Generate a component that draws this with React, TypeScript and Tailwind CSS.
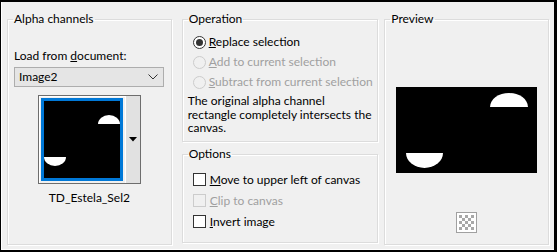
import React from "react";

const font = { fontFamily: 'Lato, "Segoe UI", sans-serif' };

function Radio({ checked, disabled, children }: { checked?: boolean; disabled?: boolean; children: React.ReactNode }) {
  return (
    <div className={`flex items-center h-[20px] whitespace-nowrap ${disabled ? "text-[#a0a0a0]" : "text-black"}`}>
      <span
        className={`w-[13px] h-[13px] shrink-0 rounded-full border flex items-center justify-center ${
          disabled ? "border-[#cccccc] bg-[#f0f0f0]" : "border-[#333333] bg-white"
        }`}
      >
        {checked && <span className="w-[7px] h-[7px] rounded-full bg-[#333333]" />}
      </span>
      <span className="ml-[3px]">{children}</span>
    </div>
  );
}

function Check({ disabled, children }: { disabled?: boolean; children: React.ReactNode }) {
  return (
    <div className={`flex items-center h-[21px] whitespace-nowrap ${disabled ? "text-[#a0a0a0]" : "text-black"}`}>
      <span
        className={`w-[13px] h-[13px] shrink-0 border ${disabled ? "border-[#cccccc]" : "border-[#333333] bg-white"}`}
      />
      <span className="ml-[4px]">{children}</span>
    </div>
  );
}

function Group({ title, className, children }: { title: string; className?: string; children: React.ReactNode }) {
  return (
    <fieldset
      className={`border border-[#dcdcdc] shadow-[inset_1px_1px_0_#ffffff,1px_1px_0_#ffffff] ${className ?? ""}`}
    >
      <legend className="ml-[5px] px-[1px] leading-[16px]">{title}</legend>
      {children}
    </fieldset>
  );
}

// black alpha channel picture with two white half discs
function AlphaPic({ w, h, big }: { w: number; h: number; big?: boolean }) {
  return (
    <svg width={w} height={h} viewBox={`0 0 ${w} ${h}`}>
      <rect width={w} height={h} fill="#000" />
      {big ? (
        <>
          <path d="M94 20 A19 14 0 0 1 132 20 Z" fill="#fff" />
          <path d="M10 66 A18.5 15 0 0 0 47 66 Z" fill="#fff" />
        </>
      ) : (
        <>
          <path d="M54 23 A11 9 0 0 1 76 23 Z" fill="#fff" />
          <path d="M0 56 A11 9 0 0 0 22 56 Z" fill="#fff" />
        </>
      )}
    </svg>
  );
}

export default function App() {
  return (
    <div
      className="w-[557px] h-[252px] bg-[#f0f0f0] border-l border-t-2 border-r-[3px] border-b-2 border-black text-[12px] text-black overflow-hidden"
      style={font}
    >
      <div className="flex h-full pl-[5px] pt-[9px] pb-[6px] pr-[5px] border-l border-b border-white">
        {/* Alpha channels */}
        <Group title="Alpha channels" className="w-[165px] h-[234px] flex flex-col">
          <div className="pl-[6px] mt-[21px] leading-[16px]">
            Load from <span className="underline">d</span>ocument:
          </div>
          <div className="ml-[6px] mt-[3px] w-[150px] h-[20px] bg-[#e5e5e5] border border-[#adadad] flex items-center justify-between pl-[4px] pr-[5px]">
            <span>Image2</span>
            <svg width="10" height="6" viewBox="0 0 10 6">
              <path d="M0.5 0.5 L5 5 L9.5 0.5" fill="none" stroke="#333" strokeWidth="1" />
            </svg>
          </div>
          <div className="mx-auto mt-[8px] flex border border-[#6d6d6d] shadow-[inset_1px_1px_0_#ffffff]">
            <div className="m-[2px] border-[3px] border-[#0078d7] flex">
              <AlphaPic w={76} h={77} />
            </div>
            <div className="w-[15px] bg-[#e1e1e1] border-l border-[#ffffff] flex items-center justify-center">
              <svg width="8" height="5" viewBox="0 0 8 5">
                <path d="M0 0 H8 L4 4.5 Z" fill="#000" />
              </svg>
            </div>
          </div>
          <div className="text-center mt-[6px] leading-[16px]">TD_Estela_Sel2</div>
        </Group>

        {/* Operation + Options */}
        <div className="ml-[10px] w-[197px] flex flex-col">
          <Group title="Operation" className="h-[131px]">
            <div className="pl-[10px] mt-[5px]">
              <Radio checked>
                <span className="underline">R</span>eplace selection
              </Radio>
              <Radio disabled>
                <span className="underline">A</span>dd to current selection
              </Radio>
              <Radio disabled>
                <span className="underline">S</span>ubtract from current selection
              </Radio>
            </div>
            <div className="pl-[5px] pr-[2px] mt-[2px] leading-[13.5px] whitespace-nowrap">
              The original alpha channel
              <br />
              rectangle completely intersects the
              <br />
              canvas.
            </div>
          </Group>
          <Group title="Options" className="mt-[4px] h-[97px]">
            <div className="pl-[10px] mt-[7px]">
              <Check>
                <span className="underline">M</span>ove to upper left of canvas
              </Check>
              <Check disabled>
                <span className="underline">C</span>lip to canvas
              </Check>
              <Check>
                <span className="underline">I</span>nvert image
              </Check>
            </div>
          </Group>
        </div>

        {/* Preview */}
        <Group title="Preview" className="ml-[6px] w-[165px] h-[234px] flex flex-col items-center">
          <div className="mt-[60px] flex">
            <AlphaPic w={141} h={86} big />
          </div>
          <div className="mt-[39px] w-[21px] h-[21px] border border-[#a0a0a0] bg-white p-[2px]">
            <svg width="15" height="15" viewBox="0 0 15 15">
              {[0, 1, 2, 3, 4].map((r) =>
                [0, 1, 2, 3, 4].map((c) =>
                  (r + c) % 2 === 0 ? (
                    <rect key={`${r}-${c}`} x={c * 3} y={r * 3} width="3" height="3" fill="#a8a8a8" />
                  ) : null
                )
              )}
            </svg>
          </div>
        </Group>
      </div>
    </div>
  );
}
